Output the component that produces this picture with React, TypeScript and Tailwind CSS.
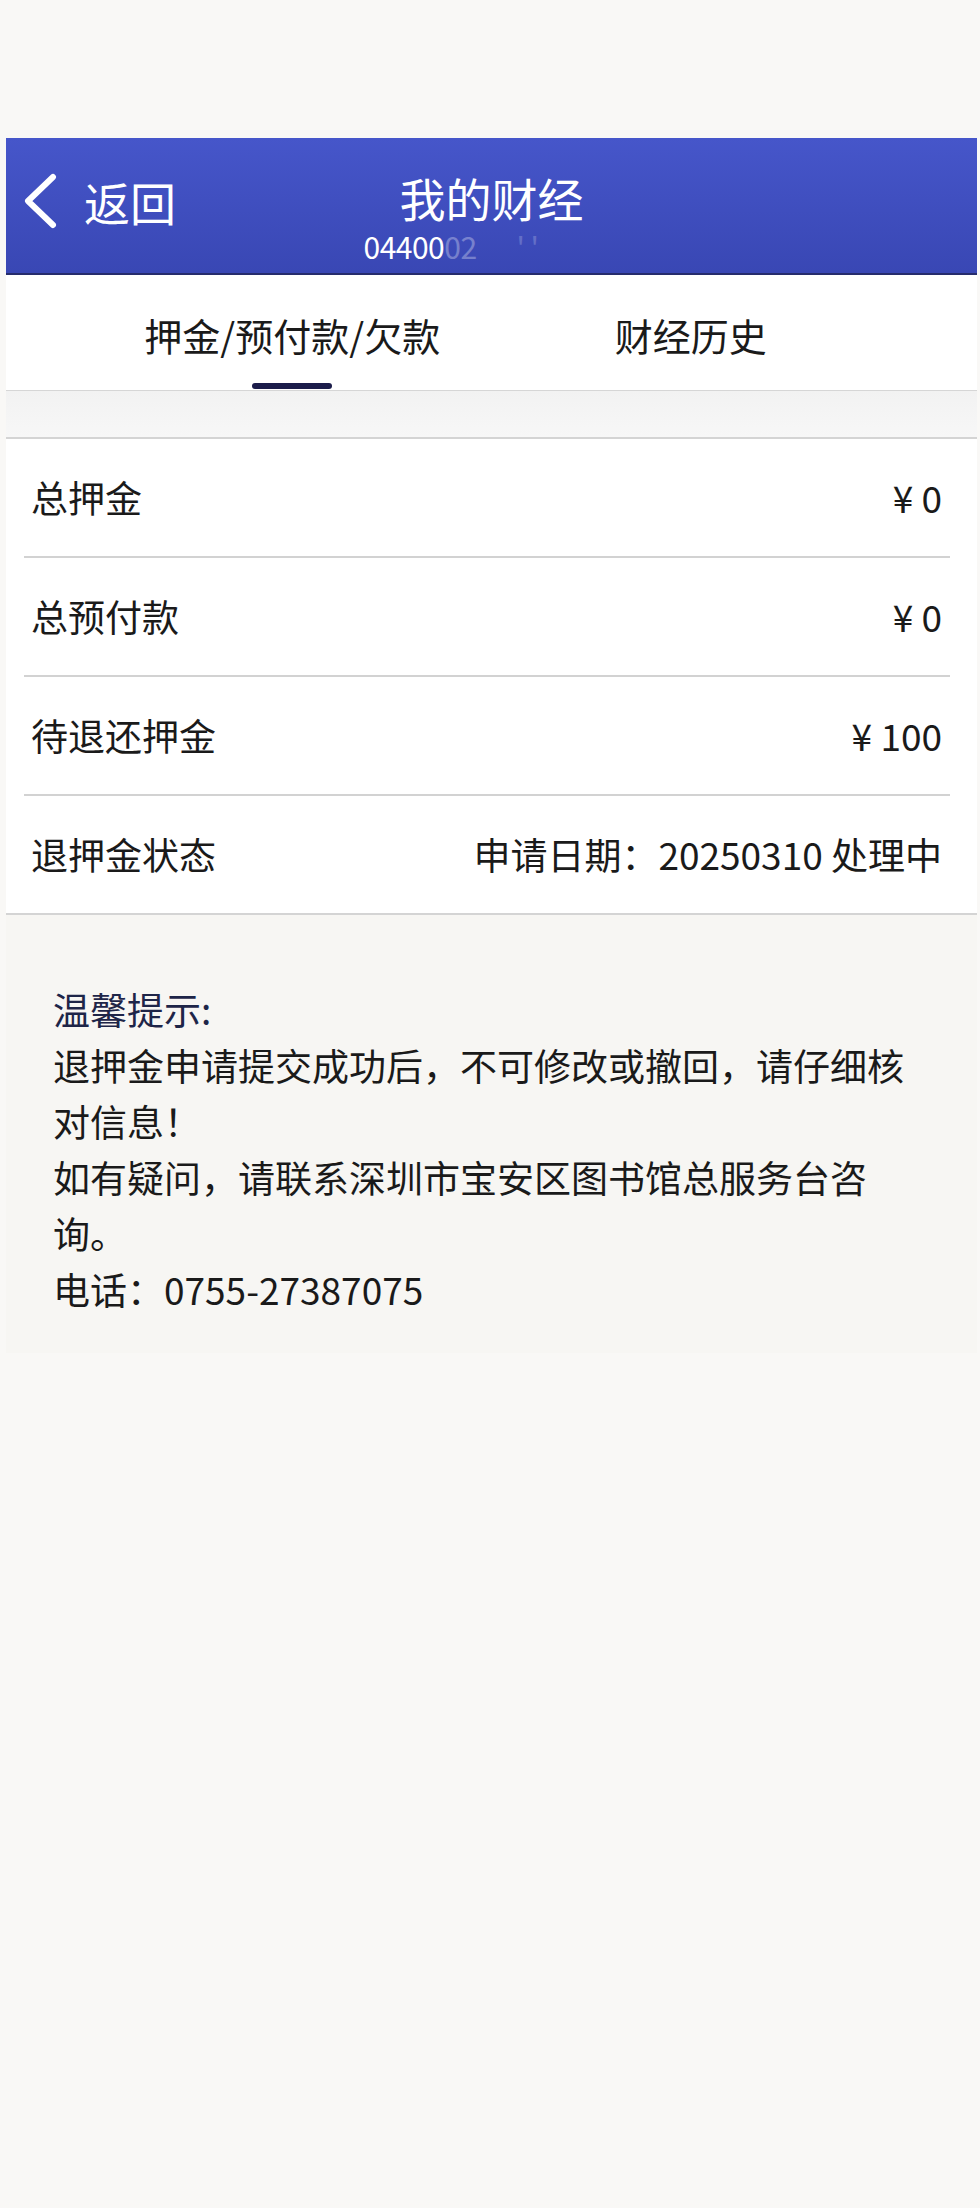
const rows = [
  { label: "总押金", value: "¥ 0" },
  { label: "总预付款", value: "¥ 0" },
  { label: "待退还押金", value: "¥ 100" },
  { label: "退押金状态", value: "申请日期：20250310 处理中" },
];

const font = { fontFamily: '"Noto Sans CJK SC", "Noto Sans", sans-serif' };

function BackIcon() {
  return (
    <svg width="36" height="56" viewBox="0 0 36 56" fill="none">
      <polyline
        points="31,4 6,28 31,52"
        stroke="white"
        strokeWidth="6"
        strokeLinecap="round"
        strokeLinejoin="round"
      />
    </svg>
  );
}

export default function App() {
  return (
    <div
      className="min-h-[2208px] bg-[#f9f8f6] pt-[138px] text-[#1a1a1a]"
      style={font}
    >
      <div className="ml-[6px] mr-[3px]">
        {/* Header */}
        <div className="grid h-[137px] grid-cols-[1fr_auto_1fr] border-b-2 border-[#262c6c] bg-gradient-to-b from-[#4656ca] to-[#3947b4] text-white">
          <div className="flex items-start gap-[26px] pl-[16px] pt-[35px]">
            <BackIcon />
            <span className="text-[46px] leading-[56px]">返回</span>
          </div>
          <div className="flex flex-col items-center pt-[33px]">
            <span className="text-[46px] leading-[52px]">我的财经</span>
            <div className="-ml-[36px] mt-[6px] flex gap-[40px] self-start text-[30px] leading-[34px] tracking-[-0.5px]">
              <span>
                04400<span className="opacity-30">02</span>
              </span>
              <span className="opacity-20">' '</span>
            </div>
          </div>
          <div />
        </div>

        {/* Tabs */}
        <div className="grid h-[116px] grid-cols-2 border-b border-[#d6d6d6] bg-white px-[87px]">
          <div className="flex flex-col items-center pt-[36px]">
            <span className="text-[38px] leading-[48px]">押金/预付款/欠款</span>
            <span className="mt-[24px] h-[6px] w-[80px] rounded-sm bg-[#1b1c4a]" />
          </div>
          <div className="flex flex-col items-center pt-[36px]">
            <span className="text-[38px] leading-[48px]">财经历史</span>
          </div>
        </div>

        <div className="h-[46px] bg-gradient-to-b from-[#f2f2f2] to-[#f7f7f7]" />

        {/* Balances */}
        <div className="border-y-2 border-[#d4d4d4] bg-white">
          {rows.map((row, i) => (
            <div key={row.label}>
              {i > 0 && <div className="ml-[18px] mr-[27px] h-[2px] bg-[#d2d2d2]" />}
              <div className="flex h-[117px] items-center justify-between pl-[25px] pr-[35px] text-[37px]">
                <span>{row.label}</span>
                <span>{row.value}</span>
              </div>
            </div>
          ))}
        </div>

        {/* Notice */}
        <div className="bg-[#f7f6f3] pb-[36px] pl-[47px] pr-[47px] pt-[66px] text-[37px] leading-[56px]">
          <div className="text-[#1e2548]">温馨提示:</div>
          <div>退押金申请提交成功后，不可修改或撤回，请仔细核对信息！</div>
          <div>如有疑问，请联系深圳市宝安区图书馆总服务台咨询。</div>
          <div>电话：0755-27387075</div>
        </div>
      </div>
    </div>
  );
}
